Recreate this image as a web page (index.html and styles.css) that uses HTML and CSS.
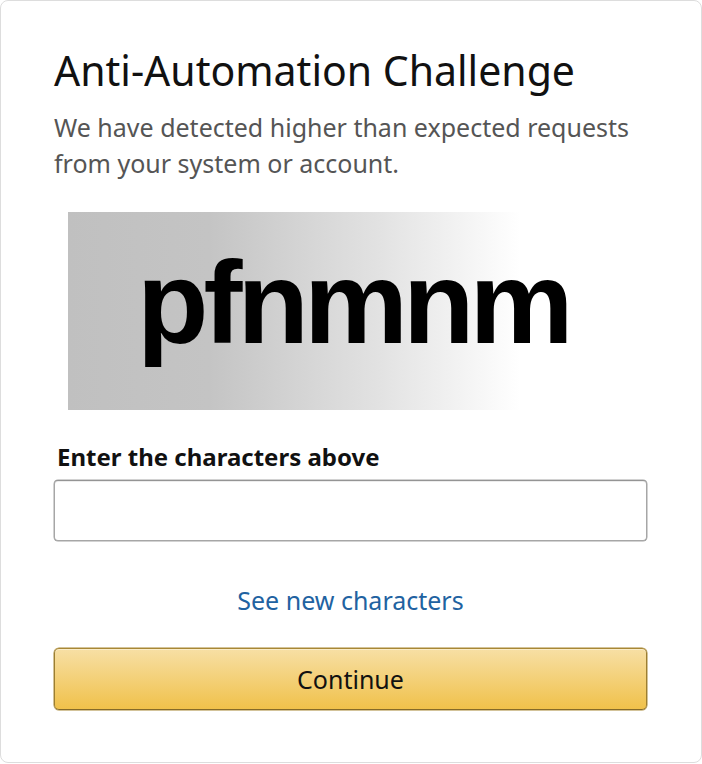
FILE: index.html
```html
<!DOCTYPE html>
<html lang="en">
<head>
<meta charset="utf-8">
<title>Anti-Automation Challenge</title>
<link rel="stylesheet" href="styles.css">
</head>
<body>
<div class="card">
  <h1 class="title">Anti-Automation Challenge</h1>
  <p class="intro">We have detected higher than expected requests<br>from your system or account.</p>
  <div class="captcha"><span class="captcha-text">pfnmnm</span></div>
  <form class="form">
    <label class="label" for="chars">Enter the characters above</label>
    <input class="input" id="chars" type="text">
    <a class="link" href="#">See new characters</a>
    <button class="button" type="button">Continue</button>
  </form>
</div>
</body>
</html>
```
FILE: styles.css
```css
html, body {
  margin: 0;
  padding: 0;
  background: #fff;
}
body {
  font-family: "Noto Sans", "Open Sans", sans-serif;
  color: #111;
}
.card {
  box-sizing: border-box;
  width: 702px;
  height: 763px;
  border: 1px solid #ddd;
  border-radius: 8px;
  padding: 45px 54px 0 53px;
}
.title {
  margin: 0;
  font-size: 41px;
  line-height: 48px;
  font-weight: 400;
  color: #111;
}
.intro {
  margin: 15px 0 0;
  font-size: 25px;
  line-height: 36px;
  color: #555;
  white-space: nowrap;
}
.captcha {
  margin: 31px auto 0;
  width: 565px;
  height: 198px;
  background: linear-gradient(to right, #c0c0c0 0%, #c4c4c4 25%, #e2e2e2 55%, #ffffff 80%, #ffffff 100%);
  display: flex;
  align-items: center;
  justify-content: flex-start;
  overflow: hidden;
}
.captcha-text {
  font-family: "Liberation Sans", Arial, sans-serif;
  font-weight: 700;
  font-size: 117px;
  letter-spacing: -5px;
  line-height: 1;
  color: #000;
  padding-left: 69px;
  margin-top: -18px;
}
.form {
  display: flex;
  flex-direction: column;
}
.label {
  margin-top: 33px;
  padding-left: 3px;
  font-size: 24px;
  line-height: 28px;
  font-weight: 700;
  color: #111;
}
.input {
  box-sizing: border-box;
  margin-top: 9px;
  height: 61px;
  width: 100%;
  border: 1px solid #a6a6a6;
  border-top-color: #949494;
  border-radius: 4px;
  box-shadow: 0 0 0 0.5px #a6a6a6, 0 1px 0 rgba(0,0,0,0.07) inset;
  font-size: 22px;
  padding: 0 12px;
  outline: none;
}
.link {
  align-self: center;
  margin-top: 44px;
  font-size: 25px;
  line-height: 30px;
  color: #2162a1;
  text-decoration: none;
}
.button {
  box-sizing: border-box;
  margin-top: 33px;
  height: 62px;
  width: 100%;
  border: 1px solid #a88734;
  border-color: #a88734 #9c7e31 #846a29;
  box-shadow: 0 0 0 0.5px #a88734, 0 1px 0 rgba(255,255,255,0.4) inset;
  border-radius: 5px;
  background: linear-gradient(to bottom, #f7dfa5, #f0c14b);
  font-family: "Noto Sans", "Open Sans", sans-serif;
  font-size: 25px;
  color: #111;
  cursor: pointer;
}
```
